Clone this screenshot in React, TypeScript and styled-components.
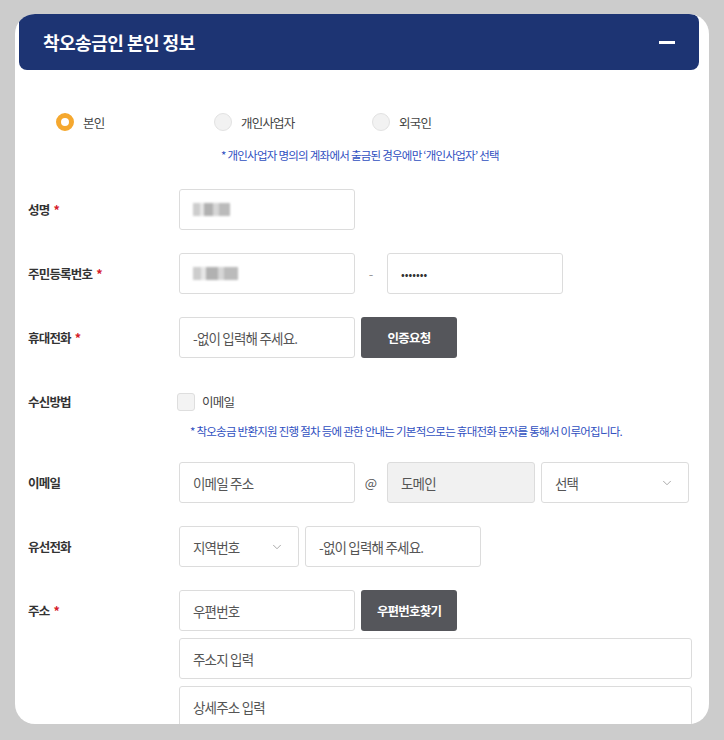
import React from 'react';
import styled, { createGlobalStyle } from 'styled-components';
import { ChevronDown } from 'lucide-react';

const GlobalStyle = createGlobalStyle`
  html, body {
    margin: 0;
    padding: 0;
    background: #cccccc;
  }
  body {
    font-family: "Noto Sans CJK KR", "Noto Sans", sans-serif;
    color: #333;
  }
  * {
    box-sizing: border-box;
  }
`;

const Page = styled.div`
  width: 724px;
  height: 740px;
  padding: 14px 15px 0 15px;
  overflow: hidden;
`;

const Card = styled.section`
  width: 694px;
  height: 710px;
  background: #fff;
  border-radius: 20px;
  overflow: hidden;
  padding: 0 10px 0 4px;
`;

const Header = styled.div`
  height: 56px;
  background: #1d3473;
  border-radius: 8px;
  display: flex;
  align-items: center;
  justify-content: space-between;
  padding: 0 24px;
`;

const Title = styled.h2`
  margin: 0;
  color: #fff;
  font-size: 18px;
  font-weight: 700;
  letter-spacing: -0.5px;
`;

const Minus = styled.span`
  width: 16px;
  height: 3px;
  background: #fff;
  display: block;
`;

const Body = styled.div`
  padding: 42px 0 0 9px;
`;

const RadioGroup = styled.div`
  display: flex;
  padding-left: 28px;
  height: 20px;
  align-items: center;
`;

const RadioItem = styled.label`
  width: 158px;
  display: flex;
  align-items: center;
  gap: 9px;
  font-size: 12.5px;
  letter-spacing: -0.8px;
  color: #444;
`;

const RadioDot = styled.span<{ $checked?: boolean }>`
  width: 18px;
  height: 18px;
  border-radius: 50%;
  flex: none;
  background: ${(p) => (p.$checked ? '#fff' : '#f2f2f2')};
  border: ${(p) => (p.$checked ? '5px solid #f5a82f' : '1px solid #e2e2e2')};
`;

const Note = styled.p<{ $indent: number }>`
  margin: 0;
  padding-left: ${(p) => p.$indent}px;
  font-size: 11.5px;
  line-height: 16px;
  letter-spacing: -0.75px;
  color: #2f4fbf;
  white-space: nowrap;
`;

const TopNote = styled(Note)`
  margin: 15px 0 26px;
`;

const Row = styled.div`
  display: grid;
  grid-template-columns: 151px 1fr;
  align-items: start;
  margin-bottom: 23px;
`;

const Label = styled.div`
  height: 41px;
  line-height: 41px;
  font-size: 12.5px;
  font-weight: 700;
  letter-spacing: -0.8px;
  color: #333;
`;

const Star = styled.span`
  color: #d6202a;
  margin-left: 4px;
`;

const Field = styled.div`
  display: flex;
  flex-direction: column;
  gap: 7px;
`;

const Line = styled.div`
  display: flex;
  align-items: center;
  gap: 6px;
  height: 41px;
`;

const Input = styled.div<{ $w?: number; $disabled?: boolean }>`
  width: ${(p) => (p.$w ? `${p.$w}px` : '100%')};
  height: 41px;
  flex: none;
  border: 1px solid #dcdcdc;
  border-radius: 3px;
  background: ${(p) => (p.$disabled ? '#f1f1f1' : '#fff')};
  display: flex;
  align-items: center;
  padding: 0 13px;
  font-size: 13.5px;
  letter-spacing: -0.8px;
  color: #555;
`;

const Select = styled(Input)`
  justify-content: space-between;
  padding-right: 14px;
  svg {
    color: #8f8f8f;
  }
`;

const Button = styled.button`
  width: 96px;
  height: 41px;
  flex: none;
  border: none;
  border-radius: 3px;
  background: #55565b;
  color: #fff;
  font-family: inherit;
  font-size: 12.5px;
  font-weight: 700;
  letter-spacing: -0.8px;
`;

const Sep = styled.span<{ $strong?: boolean }>`
  width: 20px;
  text-align: center;
  font-size: 13px;
  color: ${(p) => (p.$strong ? '#555' : '#999')};
`;

const Masked = styled.span<{ $w: number }>`
  display: block;
  width: ${(p) => p.$w}px;
  height: 13px;
  background: linear-gradient(
    90deg,
    #c8c8c8 0 18%,
    #e4e4e4 18% 30%,
    #a9a9a9 30% 55%,
    #d2d2d2 55% 70%,
    #b4b4b4 70% 100%
  );
  filter: blur(1.2px);
  opacity: 0.9;
`;

const Dots = styled.span`
  font-size: 11px;
  letter-spacing: 0;
  color: #333;
`;

const CheckLine = styled.label`
  display: flex;
  align-items: center;
  gap: 7px;
  height: 41px;
  margin-left: -2px;
  font-size: 12.5px;
  letter-spacing: -0.8px;
  color: #444;
`;

const CheckBox = styled.span`
  width: 18px;
  height: 18px;
  border: 1px solid #dedede;
  border-radius: 3px;
  background: #f3f3f3;
`;

const SubNote = styled(Note)`
  margin-top: -6px;
`;

const Chevron = () => <ChevronDown size={14} strokeWidth={1.3} />;

export default function App() {
  return (
    <Page>
      <GlobalStyle />
      <Card>
        <Header>
          <Title>착오송금인 본인 정보</Title>
          <Minus />
        </Header>
        <Body>
          <RadioGroup>
            <RadioItem>
              <RadioDot $checked />
              본인
            </RadioItem>
            <RadioItem>
              <RadioDot />
              개인사업자
            </RadioItem>
            <RadioItem>
              <RadioDot />
              외국인
            </RadioItem>
          </RadioGroup>
          <TopNote $indent={193}>
            * 개인사업자 명의의 계좌에서 출금된 경우에만 ‘개인사업자’ 선택
          </TopNote>

          <Row>
            <Label>
              성명<Star>*</Star>
            </Label>
            <Line>
              <Input $w={176}>
                <Masked $w={37} />
              </Input>
            </Line>
          </Row>

          <Row>
            <Label>
              주민등록번호<Star>*</Star>
            </Label>
            <Line>
              <Input $w={176}>
                <Masked $w={45} />
              </Input>
              <Sep>-</Sep>
              <Input $w={176}>
                <Dots>•••••••</Dots>
              </Input>
            </Line>
          </Row>

          <Row>
            <Label>
              휴대전화<Star>*</Star>
            </Label>
            <Line>
              <Input $w={176}>-없이 입력해 주세요.</Input>
              <Button>인증요청</Button>
            </Line>
          </Row>

          <Row>
            <Label>수신방법</Label>
            <Field>
              <CheckLine>
                <CheckBox />
                이메일
              </CheckLine>
              <SubNote $indent={11}>
                * 착오송금 반환지원 진행 절차 등에 관한 안내는 기본적으로는 휴대전화 문자를 통해서 이루어집니다.
              </SubNote>
            </Field>
          </Row>

          <Row>
            <Label>이메일</Label>
            <Line>
              <Input $w={176}>이메일 주소</Input>
              <Sep $strong>@</Sep>
              <Input $w={148} $disabled>
                도메인
              </Input>
              <Select $w={148}>
                선택
                <Chevron />
              </Select>
            </Line>
          </Row>

          <Row>
            <Label>유선전화</Label>
            <Line>
              <Select $w={120}>
                지역번호
                <Chevron />
              </Select>
              <Input $w={176}>-없이 입력해 주세요.</Input>
            </Line>
          </Row>

          <Row>
            <Label>
              주소<Star>*</Star>
            </Label>
            <Field>
              <Line>
                <Input $w={176}>우편번호</Input>
                <Button>우편번호찾기</Button>
              </Line>
              <Input $w={513}>주소지 입력</Input>
              <Input $w={513}>상세주소 입력</Input>
            </Field>
          </Row>
        </Body>
      </Card>
    </Page>
  );
}
